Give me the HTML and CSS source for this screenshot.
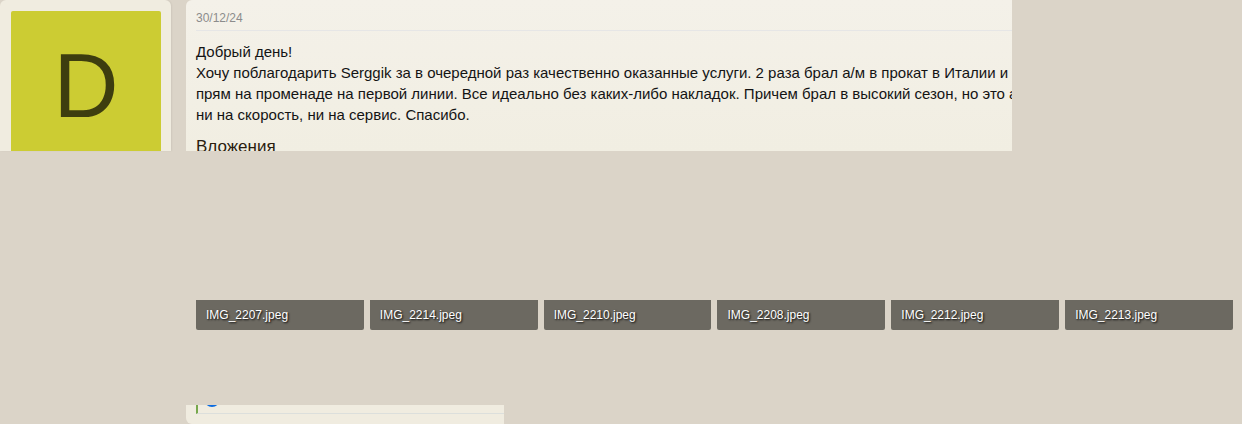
FILE: index.html
```
<!DOCTYPE html>
<html lang="ru">
<head>
    <meta charset="UTF-8">
    <meta name="viewport" content="width=device-width, initial-scale=1.0">
    <title>Отзыв</title>
    <link rel="stylesheet" href="styles.css">
</head>
<body>
    <div class="message">
        <aside class="user">
            <div class="avatar">D</div>
        </aside>
        <main class="main">
            <article class="post">
                <header class="post-header"><time datetime="2024-12-30">30/12/24</time></header>
                <p class="post-text">Добрый день!<br>
                    Хочу поблагодарить Serggik за в очередной раз качественно оказанные услуги. 2 раза брал а/м в прокат в Италии и<br>
                    прям на променаде на первой линии. Все идеально без каких-либо накладок. Причем брал в высокий сезон, но это а<br>
                    ни на скорость, ни на сервис. Спасибо.</p>
                <h4 class="attach-title">Вложения</h4>
            </article>
            <ul class="attachments">
                <li class="file">IMG_2207.jpeg</li>
                <li class="file">IMG_2214.jpeg</li>
                <li class="file">IMG_2210.jpeg</li>
                <li class="file">IMG_2208.jpeg</li>
                <li class="file">IMG_2212.jpeg</li>
                <li class="file">IMG_2213.jpeg</li>
            </ul>
            <footer class="post-footer">
                <div class="reactions">
                    <svg class="like" viewBox="0 0 16 2" width="16" height="2">
                        <circle cx="8" cy="-6" r="8" fill="#0b6be0"/>
                    </svg>
                </div>
            </footer>
        </main>
    </div>
</body>
</html>
```
FILE: styles.css
```
body {
    margin: 0;
    background-color: #dbd4c8;
    font-family: "Liberation Sans", Arial, sans-serif;
    font-size: 15px;
    line-height: 21px;
    color: #141414;
}
.message {
    display: grid;
    grid-template-columns: 171px 1fr;
    column-gap: 15px;
    align-items: start;
}
.user {
    height: 151px;
    box-sizing: border-box;
    padding: 11px 10px 0 11px;
    overflow: hidden;
    background-color: #f0ece0;
    border-radius: 6px 6px 0 0;
    box-shadow: 1px 0 2px rgba(0, 0, 0, 0.06);
}
.avatar {
    height: 150px;
    line-height: 150px;
    font-size: 90px;
    text-align: center;
    color: #3d3d0f;
    background-color: #cccc33;
    border-radius: 2px;
}
.main {
    min-width: 0;
}
.post {
    width: 78.2%;
    height: 151px;
    box-sizing: border-box;
    padding: 10px 0 0 10px;
    overflow: hidden;
    white-space: nowrap;
    background: linear-gradient(#f4f1e9, #f1eee2);
    border-radius: 6px 0 0 0;
}
.post-header {
    height: 20px;
    line-height: 16px;
    font-size: 12px;
    color: #8c8c8c;
    border-bottom: 1px solid #e6e6e6;
}
.post-text {
    margin: 10px 0;
}
.attach-title {
    margin: 0;
    font-size: 17px;
    line-height: 23px;
    font-weight: 400;
    color: #2b1d0e;
}
.attachments {
    display: grid;
    grid-template-columns: repeat(6, 1fr);
    gap: 6px;
    margin: 149px 9px 75px 10px;
    padding: 0;
    list-style: none;
}
.file {
    padding: 0 10px;
    line-height: 30px;
    font-size: 12px;
    color: #fff;
    text-shadow: 1px 1px 2px #000;
    background-color: #6c6961;
    border-radius: 0 0 2px 2px;
}
/* the tail of the post card, with the reactions row */
.post-footer {
    width: 30.1%;
    height: 19px;
    box-sizing: border-box;
    padding-left: 10px;
    background-color: #f0ece0;
    border-radius: 0 0 0 6px;
}
.reactions {
    height: 8px;
    padding-left: 6px;
    border-left: 2px solid #77a84c;
    border-bottom: 1px solid #dcdfdc;
}
.like {
    display: block;
}
```
